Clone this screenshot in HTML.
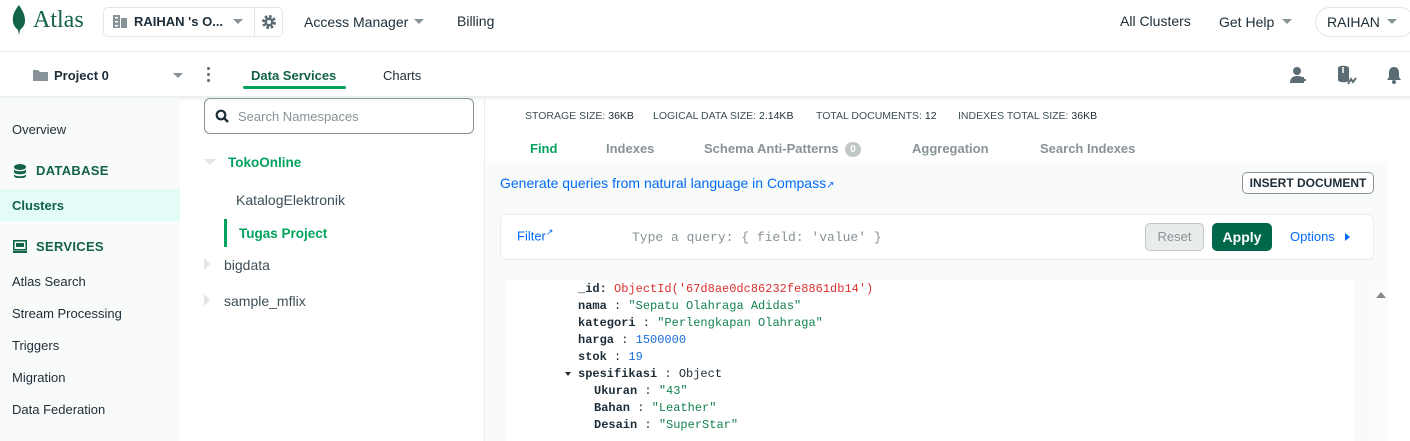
<!DOCTYPE html>
<html><head><meta charset="utf-8"><style>
*{margin:0;padding:0;box-sizing:border-box}
body{width:1410px;height:441px;overflow:hidden;background:#fff;font-family:"Liberation Sans",sans-serif;color:#1c2d38;position:relative}
.a{position:absolute;white-space:nowrap}
.mono{font-family:"Liberation Mono",monospace;font-size:12px}
.k{font-weight:bold;color:#1c2d38}
.s{color:#12824d}
.n{color:#1a6fe0}
.tab{font-weight:bold;font-size:13px;color:#889397}
</style></head><body>
<div class="a" style="left:0;top:51px;width:1410px;height:1px;background:#e8edeb"></div>
<svg class="a" style="left:12px;top:5px" width="14" height="30" viewBox="0 0 14 30"><path d="M7 0C3 5 0 10 1 17c1 5 4 7 5 8l1 5 1-5c1-1 5-4 5-9 0-7-3-11-6-16z" fill="#13624a"/></svg>
<div class="a" style="left:33px;top:7px;font-size:24px;color:#13624a;font-family:'Liberation Serif',serif">Atlas</div>
<div class="a" style="left:103px;top:7px;width:180px;height:30px;border:1px solid #e1e5e6;border-radius:5px"></div>
<div class="a" style="left:254px;top:7px;width:1px;height:30px;background:#e1e5e6"></div>
<svg class="a" style="left:113px;top:15px" width="14" height="13"><rect x="0" y="0" width="7" height="13" fill="#889397"/><rect x="8" y="3" width="6" height="10" fill="#889397"/><rect x="2" y="2" width="3" height="1.5" fill="#fff"/><rect x="2" y="6" width="3" height="1.5" fill="#fff"/><rect x="2" y="10" width="3" height="1.5" fill="#fff"/></svg>
<div class="a" style="left:134px;top:14px;font-size:13px;font-weight:bold">RAIHAN 's O...</div>
<div class="a" style="left:233px;top:19px;border:5px solid transparent;border-top:5px solid #889397"></div>
<svg class="a" style="left:261px;top:14px" width="16" height="16" viewBox="0 0 16 16"><circle cx="8" cy="8" r="5.5" fill="none" stroke="#5c6c75" stroke-width="3" stroke-dasharray="2.6 1.7"/><circle cx="8" cy="8" r="4.5" fill="#5c6c75"/><circle cx="8" cy="8" r="2" fill="#fff"/></svg>
<div class="a" style="left:304px;top:14px;font-size:14px">Access Manager</div>
<div class="a" style="left:414px;top:19px;border:5px solid transparent;border-top:5px solid #889397"></div>
<div class="a" style="left:457px;top:13px;font-size:14px">Billing</div>
<div class="a" style="left:1120px;top:13px;font-size:14px">All Clusters</div>
<div class="a" style="left:1219px;top:14px;font-size:14px">Get Help</div>
<div class="a" style="left:1282px;top:19px;border:5px solid transparent;border-top:5px solid #889397"></div>
<div class="a" style="left:1315px;top:7px;width:100px;height:30px;border:1px solid #e1e5e6;border-radius:15px"></div>
<div class="a" style="left:1327px;top:14px;font-size:14px">RAIHAN</div>
<div class="a" style="left:1387px;top:19px;border:5px solid transparent;border-top:5px solid #889397"></div>
<svg class="a" style="left:33px;top:69px" width="15" height="12"><path d="M0 1h5l2 2h8v9H0z" fill="#889397"/></svg>
<div class="a" style="left:54px;top:68px;font-size:13px;font-weight:bold">Project 0</div>
<div class="a" style="left:173px;top:73px;border:5px solid transparent;border-top:5px solid #889397"></div>
<div class="a" style="left:207px;top:67px;width:3px;height:3px;background:#5c6c75;border-radius:50%;box-shadow:0 6px #5c6c75,0 12px #5c6c75"></div>
<div class="a" style="left:251px;top:68px;font-size:13px;font-weight:bold;color:#13624a">Data Services</div>
<div class="a" style="left:243px;top:86px;width:103px;height:3px;background:#00a35c;border-radius:2px"></div>
<div class="a" style="left:383px;top:68px;font-size:13px">Charts</div>
<svg class="a" style="left:1290px;top:66px" width="18" height="18"><circle cx="7" cy="5" r="4" fill="#5c6c75"/><path d="M0 17c0-5 3-7 7-7s6 1 6 3v4z" fill="#5c6c75"/><path d="M13 11v6M10 14h6" stroke="#5c6c75" stroke-width="2"/></svg>
<svg class="a" style="left:1336px;top:64px" width="22" height="22"><path d="M2 4c0-3 11-3 11 0v12c0 3-11 3-11 0z" fill="#5c6c75"/><path d="M7 3v6" stroke="#fff" stroke-width="1.5"/><path d="M12 20l3-5 2 3 3-4" stroke="#5c6c75" stroke-width="2" fill="none"/></svg>
<svg class="a" style="left:1386px;top:66px" width="16" height="18"><path d="M8 1c-4 0-5 3-5 6v4l-2 3h14l-2-3V7c0-3-1-6-5-6z" fill="#5c6c75"/><circle cx="8" cy="16" r="2" fill="#5c6c75"/></svg>
<div class="a" style="left:0;top:96px;width:1410px;height:5px;background:linear-gradient(#e8ecec,#fff0)"></div>
<div class="a" style="left:0;top:98px;width:180px;height:343px;background:#f9fbfa"></div>
<div class="a" style="left:12px;top:122px;font-size:13px">Overview</div>
<svg class="a" style="left:14px;top:164px" width="12" height="14"><ellipse cx="6" cy="3" rx="6" ry="3" fill="#13624a"/><path d="M0 5c0 3 12 3 12 0v3c0 3-12 3-12 0zM0 10c0 3 12 3 12 0v2c0 3-12 3-12 0z" fill="#13624a"/></svg>
<div class="a" style="left:36px;top:163px;font-size:13px;font-weight:bold;color:#13624a;letter-spacing:.3px">DATABASE</div>
<div class="a" style="left:0;top:189px;width:180px;height:32px;background:#e3fcf7"></div>
<div class="a" style="left:12px;top:198px;font-size:13px;font-weight:bold;color:#13624a">Clusters</div>
<svg class="a" style="left:13px;top:240px" width="14" height="13"><rect x="0.8" y="0.8" width="12.4" height="9" fill="none" stroke="#13624a" stroke-width="1.6"/><rect x="3" y="3" width="8" height="4" fill="#13624a"/><rect x="0" y="11" width="14" height="2" fill="#13624a"/></svg>
<div class="a" style="left:36px;top:239px;font-size:13px;font-weight:bold;color:#13624a;letter-spacing:.3px">SERVICES</div>
<div class="a" style="left:12px;top:274px;font-size:13px">Atlas Search</div>
<div class="a" style="left:12px;top:306px;font-size:13px">Stream Processing</div>
<div class="a" style="left:12px;top:338px;font-size:13px">Triggers</div>
<div class="a" style="left:12px;top:370px;font-size:13px">Migration</div>
<div class="a" style="left:12px;top:402px;font-size:13px">Data Federation</div>
<div class="a" style="left:484px;top:98px;width:1px;height:343px;background:#e8edeb"></div>
<div class="a" style="left:204px;top:98px;width:270px;height:36px;border:1px solid #889397;border-radius:6px"></div>
<svg class="a" style="left:215px;top:109px" width="14" height="14"><circle cx="6" cy="6" r="4.3" fill="none" stroke="#1c2d38" stroke-width="2.2"/><path d="M9 9l4 4" stroke="#1c2d38" stroke-width="2.4"/></svg>
<div class="a" style="left:238px;top:109px;font-size:13px;color:#889397">Search Namespaces</div>
<div class="a" style="left:204px;top:159px;border:6px solid transparent;border-top:6px solid #e1e5e6"></div>
<div class="a" style="left:228px;top:155px;font-size:13.5px;font-weight:bold;color:#00a35c">TokoOnline</div>
<div class="a" style="left:236px;top:192px;font-size:14px;color:#3d4f58">KatalogElektronik</div>
<div class="a" style="left:224px;top:219px;width:3px;height:28px;background:#00a35c"></div>
<div class="a" style="left:239px;top:226px;font-size:13.5px;font-weight:bold;color:#00a35c">Tugas Project</div>
<div class="a" style="left:204px;top:258px;border:6px solid transparent;border-left:6px solid #e1e5e6"></div>
<div class="a" style="left:224px;top:257px;font-size:14px;color:#3d4f58">bigdata</div>
<div class="a" style="left:204px;top:294px;border:6px solid transparent;border-left:6px solid #e1e5e6"></div>
<div class="a" style="left:224px;top:293px;font-size:14px;color:#3d4f58">sample_mflix</div>
<div class="a" style="left:525px;top:110px;font-size:10.5px;color:#3d4f58">STORAGE SIZE: <span style="color:#1c2d38">36KB</span></div>
<div class="a" style="left:653px;top:110px;font-size:10.5px;color:#3d4f58">LOGICAL DATA SIZE: <span style="color:#1c2d38">2.14KB</span></div>
<div class="a" style="left:816px;top:110px;font-size:10.5px;color:#3d4f58">TOTAL DOCUMENTS: <span style="color:#1c2d38">12</span></div>
<div class="a" style="left:958px;top:110px;font-size:10.5px;color:#3d4f58">INDEXES TOTAL SIZE: <span style="color:#1c2d38">36KB</span></div>
<div class="a tab" style="left:530px;top:141px;color:#00a35c">Find</div>
<div class="a tab" style="left:606px;top:141px">Indexes</div>
<div class="a tab" style="left:704px;top:141px">Schema Anti-Patterns</div>
<div class="a" style="left:845px;top:142px;width:16px;height:15px;border-radius:8px;background:#c1c7c6;color:#fff;font-size:10px;font-weight:bold;text-align:center;line-height:15px">0</div>
<div class="a tab" style="left:912px;top:141px">Aggregation</div>
<div class="a tab" style="left:1040px;top:141px">Search Indexes</div>
<div class="a" style="left:486px;top:161px;width:902px;height:280px;background:#f9fbfa"></div>
<div class="a" style="left:500px;top:175px;font-size:14px;color:#016bf8">Generate queries from natural language in Compass<span style="font-size:10px">&#x2197;</span></div>
<div class="a" style="left:1242px;top:172px;width:132px;height:22px;border:1px solid #889397;border-radius:5px;background:#fff;font-size:12px;font-weight:bold;text-align:center;line-height:20px">INSERT DOCUMENT</div>
<div class="a" style="left:500px;top:214px;width:874px;height:46px;border:1px solid #e8edeb;border-radius:6px;background:#fff"></div>
<div class="a" style="left:517px;top:227px;font-size:13px;color:#016bf8">Filter<sup style="font-size:9px">&#x2197;</sup></div>
<div class="a mono" style="left:632px;top:230px;color:#889397;font-size:13px">Type a query: { field: 'value' }</div>
<div class="a" style="left:1145px;top:223px;width:59px;height:28px;border:1px solid #c1c7c6;border-radius:5px;background:#e8edeb;color:#889397;font-size:13px;text-align:center;line-height:26px">Reset</div>
<div class="a" style="left:1212px;top:223px;width:60px;height:28px;border-radius:5px;background:#00684a;color:#fff;font-size:14px;font-weight:bold;text-align:center;line-height:28px">Apply</div>
<div class="a" style="left:1290px;top:229px;font-size:13px;color:#016bf8">Options</div>
<div class="a" style="left:1345px;top:233px;border:4px solid transparent;border-left:5px solid #016bf8"></div>
<div class="a" style="left:505px;top:280px;width:849px;height:161px;background:#fff"></div>
<div class="a" style="left:1374px;top:280px;width:14px;height:161px;background:#fbfbfb"></div>
<div class="a" style="left:1376px;top:287px;border:5px solid transparent;border-bottom:6px solid #888"></div>
<div class="a mono" style="left:578px;top:281px;line-height:17px">
<div><span class="k">_id:</span> <span style="color:#db3030">ObjectId('67d8ae0dc86232fe8861db14')</span></div>
<div><span class="k">nama</span> : <span class="s">"Sepatu Olahraga Adidas"</span></div>
<div><span class="k">kategori</span> : <span class="s">"Perlengkapan Olahraga"</span></div>
<div><span class="k">harga</span> : <span class="n">1500000</span></div>
<div><span class="k">stok</span> : <span class="n">19</span></div>
<div><span class="k">spesifikasi</span> : Object</div>
<div style="padding-left:16px"><span class="k">Ukuran</span> : <span class="s">"43"</span></div>
<div style="padding-left:16px"><span class="k">Bahan</span> : <span class="s">"Leather"</span></div>
<div style="padding-left:16px"><span class="k">Desain</span> : <span class="s">"SuperStar"</span></div>
</div>
<div class="a" style="left:565px;top:372px;border:3.5px solid transparent;border-top:4px solid #1c2d38"></div>
</body></html>
